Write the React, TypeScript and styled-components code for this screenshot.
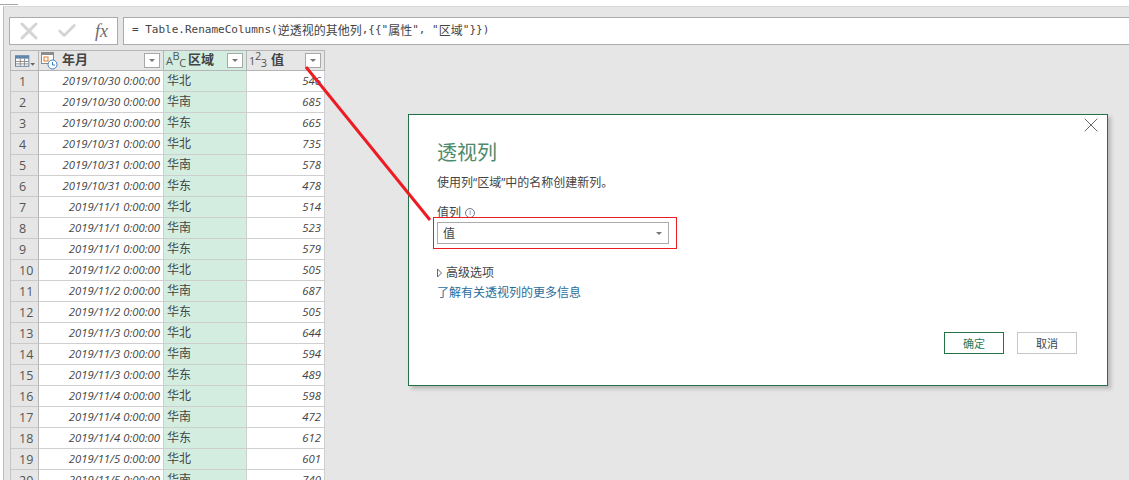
import React from 'react'
import styled, { createGlobalStyle } from 'styled-components'
import { Check, X } from 'lucide-react'

const sans = `"Open Sans", "Noto Sans CJK SC", sans-serif`

const GlobalStyle = createGlobalStyle`
  html, body {
    margin: 0;
    padding: 0;
    background: #fff;
    overflow: hidden;
  }
  body {
    font-family: ${sans};
  }
`

const Page = styled.div`
  position: relative;
  width: 1129px;
  height: 480px;
  overflow: hidden;
  background: #fff;
`

const TopStrip = styled.div`
  height: 4px;
  width: 18px;
  border-bottom: 1px solid #a6a6a6;
  margin-bottom: 1px;
`

const Workspace = styled.div`
  height: 474px;
  box-sizing: border-box;
  margin-left: 3px;
  border-left: 1px solid #bdbdbd;
  border-top: 1px solid #d8d8d8;
  background: #e6e6e6;
  padding: 10px 0 0 5px;
`

const FormulaRow = styled.div`
  display: flex;
  gap: 5px;
  height: 28px;
  margin-bottom: 5px;
`

const FormulaButtons = styled.div`
  width: 109px;
  box-sizing: border-box;
  background: #fff;
  border: 1px solid #ababab;
  display: flex;
  align-items: center;
  padding-left: 5px;
  color: #d4d4d4;
`

const CheckMark = styled(Check)`
  margin-left: 13px;
`

const Fx = styled.span`
  margin-left: 17px;
  font-family: "Liberation Serif", serif;
  font-style: italic;
  font-size: 18px;
  color: #6d6d6d;
`

const FormulaInput = styled.div`
  flex: 1;
  background: #fff;
  border: 1px solid #ababab;
  border-right: 0;
  display: flex;
  align-items: center;
  padding: 0 0 3px 8px;
  font-family: "DejaVu Sans Mono", "Noto Sans CJK SC", monospace;
  font-size: 11px;
  color: #444;
  white-space: pre;
`

const Han = styled.span`
  font-family: "Noto Sans CJK SC", sans-serif;
  font-size: 12px;
`

const Table = styled.div`
  width: 315px;
  margin-left: 1px;
  display: grid;
  grid-template-columns: 29px 125px 83px 78px;
  grid-auto-rows: 21px;
  font-size: 12px;
`

const HeadCell = styled.div<{ $active?: boolean }>`
  box-sizing: border-box;
  display: flex;
  align-items: center;
  background: ${p => (p.$active ? '#d3eee0' : '#e6e6e6')};
  border-top: 1px solid #b5b5b5;
  border-right: 1px solid #b5b5b5;
  border-bottom: 1px solid #b5b5b5;
  &:first-child {
    border-left: 1px solid #b5b5b5;
    padding-left: 4px;
  }
  padding-left: 2px;
  padding-right: 2px;
`

const HeadLabel = styled.span`
  flex: 1;
  margin-left: 3px;
  padding-bottom: 2px;
  font-weight: 700;
  font-size: 13px;
  line-height: 17px;
  color: #444;
`

const FilterButton = styled.div`
  width: 16px;
  height: 15px;
  box-sizing: border-box;
  margin-right: 1px;
  border: 1px solid #a8a8a8;
  background: #fff;
  display: flex;
  align-items: center;
  justify-content: center;
  &::after {
    content: '';
    border-left: 3px solid transparent;
    border-right: 3px solid transparent;
    border-top: 3px solid #777;
  }
`

const TypeIcon = styled.span`
  width: 19px;
  flex: none;
  font-family: "Open Sans", sans-serif;
  font-size: 11px;
  line-height: 12px;
  color: #555;
  letter-spacing: -0.4px;
  white-space: nowrap;
  padding-top: 1px;
  sup, sub {
    font-size: 11px;
    line-height: 0;
  }
  sup {
    vertical-align: 5px;
  }
  sub {
    vertical-align: -2px;
  }
`

const IndexCell = styled.div`
  box-sizing: border-box;
  background: #e6e6e6;
  border-left: 1px solid #c4c4c4;
  border-right: 1px solid #b5b5b5;
  border-bottom: 1px solid #c9c9c9;
  color: #555;
  font-size: 12.5px;
  padding-left: 8px;
  line-height: 21px;
`

const DateCell = styled.div`
  box-sizing: border-box;
  background: #fff;
  border-right: 1px solid #cfcfcf;
  border-bottom: 1px solid #cfcfcf;
  color: #444;
  font-style: italic;
  font-size: 11.3px;
  text-align: right;
  padding-right: 3px;
  line-height: 20px;
  white-space: nowrap;
`

const RegionCell = styled.div`
  box-sizing: border-box;
  background: #d3eee0;
  border-right: 1px solid #cfcfcf;
  border-bottom: 1px solid #cfcfcf;
  color: #444;
  font-size: 12px;
  padding-left: 3px;
  line-height: 19px;
`

const ValueCell = styled.div`
  box-sizing: border-box;
  background: #fff;
  border-right: 1px solid #cfcfcf;
  border-bottom: 1px solid #cfcfcf;
  color: #444;
  font-style: italic;
  font-size: 11.3px;
  text-align: right;
  padding-right: 3px;
  line-height: 20px;
`

const Connector = styled.svg`
  position: absolute;
  left: 0;
  top: 0;
  pointer-events: none;
`

const Dialog = styled.div`
  position: absolute;
  left: 408px;
  top: 114px;
  width: 700px;
  height: 272px;
  box-sizing: border-box;
  background: #fff;
  border: 1px solid #217346;
  box-shadow: 3px 3px 4px rgba(0, 0, 0, 0.2);
  padding: 24px 28px 0;
  display: flex;
  flex-direction: column;
  color: #444;
`

const CloseButton = styled.div`
  position: absolute;
  top: -2px;
  right: 4px;
  color: #666;
  display: flex;
`

const Title = styled.div`
  font-size: 20px;
  line-height: 28px;
  color: #4e8a6c;
  margin-bottom: 7px;
`

const Description = styled.div`
  font-size: 12px;
  line-height: 18px;
  margin-bottom: 14px;
`

const FieldLabel = styled.div`
  display: flex;
  align-items: center;
  gap: 4px;
  font-size: 12px;
  line-height: 14px;
  margin-bottom: 2px;
`

const InfoMark = styled.span`
  width: 10px;
  height: 10px;
  box-sizing: border-box;
  border: 1px solid #777;
  border-radius: 50%;
  font-size: 7px;
  line-height: 8px;
  text-align: center;
  color: #666;
`

const SelectBox = styled.div`
  width: 232px;
  height: 22px;
  flex: none;
  box-sizing: border-box;
  border: 1px solid #ababab;
  display: flex;
  align-items: center;
  justify-content: space-between;
  padding: 0 5px;
  font-size: 12px;
  margin-bottom: 19px;
  &::after {
    content: '';
    border-left: 3px solid transparent;
    border-right: 3px solid transparent;
    border-top: 3px solid #777;
    margin-right: 1px;
  }
`

const Highlight = styled.div`
  position: absolute;
  left: 24px;
  top: 102px;
  width: 244px;
  height: 32px;
  box-sizing: border-box;
  border: 1px solid #ed1c24;
`

const Advanced = styled.div`
  display: flex;
  align-items: center;
  gap: 4px;
  font-size: 12px;
  line-height: 20px;
`

const HelpLink = styled.div`
  font-size: 12px;
  line-height: 20px;
  color: #1f6e9c;
`

const Footer = styled.div`
  display: flex;
  justify-content: flex-end;
  gap: 13px;
  margin-top: 29px;
  margin-right: 2px;
`

const DialogButton = styled.div<{ $primary?: boolean }>`
  width: 60px;
  height: 22px;
  box-sizing: border-box;
  border: 1px solid ${p => (p.$primary ? '#217346' : '#c6c6c6')};
  display: flex;
  align-items: center;
  justify-content: center;
  font-size: 11px;
  color: ${p => (p.$primary ? '#2c7a54' : '#444')};
`

const rows: [string, string, string][] = [
  ['2019/10/30', '华北', '546'],
  ['2019/10/30', '华南', '685'],
  ['2019/10/30', '华东', '665'],
  ['2019/10/31', '华北', '735'],
  ['2019/10/31', '华南', '578'],
  ['2019/10/31', '华东', '478'],
  ['2019/11/1', '华北', '514'],
  ['2019/11/1', '华南', '523'],
  ['2019/11/1', '华东', '579'],
  ['2019/11/2', '华北', '505'],
  ['2019/11/2', '华南', '687'],
  ['2019/11/2', '华东', '505'],
  ['2019/11/3', '华北', '644'],
  ['2019/11/3', '华南', '594'],
  ['2019/11/3', '华东', '489'],
  ['2019/11/4', '华北', '598'],
  ['2019/11/4', '华南', '472'],
  ['2019/11/4', '华东', '612'],
  ['2019/11/5', '华北', '601'],
  ['2019/11/5', '华南', '740'],
]

const TableIcon = () => (
  <svg width="22" height="14" viewBox="0 0 22 14">
    <rect x="0.5" y="1.5" width="14" height="11" fill="#fff" stroke="#5f7f9f" />
    <rect x="0.5" y="1.5" width="14" height="3" fill="#5f86ad" />
    <path d="M5.5 4v8M10 4v8M1 7.5h13M1 10h13" stroke="#8a8a8a" />
    <path d="M16 9h5l-2.5 3z" fill="#666" />
  </svg>
)

const DateTimeIcon = () => (
  <svg width="18" height="18" viewBox="0 0 18 18">
    <rect x="0.5" y="0.5" width="12" height="11" fill="#fff" stroke="#8c8c8c" />
    <rect x="1" y="1" width="11" height="2" fill="#8c8c8c" />
    <rect x="3" y="5" width="4" height="4" fill="none" stroke="#e07b2a" />
    <circle cx="11.5" cy="12.5" r="4.5" fill="#fff" stroke="#3f7fbf" />
    <path d="M11.5 10v3h2.5" fill="none" stroke="#3f7fbf" />
  </svg>
)

const ExpandIcon = () => (
  <svg width="5" height="10" viewBox="0 0 5 10">
    <path d="M0.5 1v8l4-4z" fill="#fff" stroke="#666" />
  </svg>
)

const App = () => (
  <Page>
    <GlobalStyle />
    <TopStrip />
    <Workspace>
      <FormulaRow>
        <FormulaButtons>
          <X size={28} strokeWidth={2.6} />
          <CheckMark size={22} strokeWidth={3} />
          <Fx>fx</Fx>
        </FormulaButtons>
        <FormulaInput>
          = Table.RenameColumns(<Han>逆透视的其他列</Han>,{'{{'}"<Han>属性</Han>", "<Han>区域</Han>"{'}}'})
        </FormulaInput>
      </FormulaRow>
      <Table>
        <HeadCell>
          <TableIcon />
        </HeadCell>
        <HeadCell>
          <DateTimeIcon />
          <HeadLabel>年月</HeadLabel>
          <FilterButton />
        </HeadCell>
        <HeadCell $active>
          <TypeIcon>
            A<sup>B</sup>
            <sub>C</sub>
          </TypeIcon>
          <HeadLabel>区域</HeadLabel>
          <FilterButton />
        </HeadCell>
        <HeadCell>
          <TypeIcon>
            1<sup>2</sup>
            <sub>3</sub>
          </TypeIcon>
          <HeadLabel>值</HeadLabel>
          <FilterButton />
        </HeadCell>
        {rows.map(([date, region, value], i) => (
          <React.Fragment key={i}>
            <IndexCell>{i + 1}</IndexCell>
            <DateCell>{date} 0:00:00</DateCell>
            <RegionCell>{region}</RegionCell>
            <ValueCell>{value}</ValueCell>
          </React.Fragment>
        ))}
      </Table>
    </Workspace>
    <Dialog>
      <CloseButton>
        <X size={24} strokeWidth={1} />
      </CloseButton>
      <Title>透视列</Title>
      <Description>使用列“区域”中的名称创建新列。</Description>
      <FieldLabel>
        值列 <InfoMark>i</InfoMark>
      </FieldLabel>
      <SelectBox>值</SelectBox>
      <Highlight />
      <Advanced>
        <ExpandIcon />
        高级选项
      </Advanced>
      <HelpLink>了解有关透视列的更多信息</HelpLink>
      <Footer>
        <DialogButton $primary>确定</DialogButton>
        <DialogButton>取消</DialogButton>
      </Footer>
    </Dialog>
    <Connector width="1129" height="480">
      <line x1="306" y1="67" x2="430" y2="220" stroke="#ed1c24" strokeWidth="3" />
    </Connector>
  </Page>
)

export default App
